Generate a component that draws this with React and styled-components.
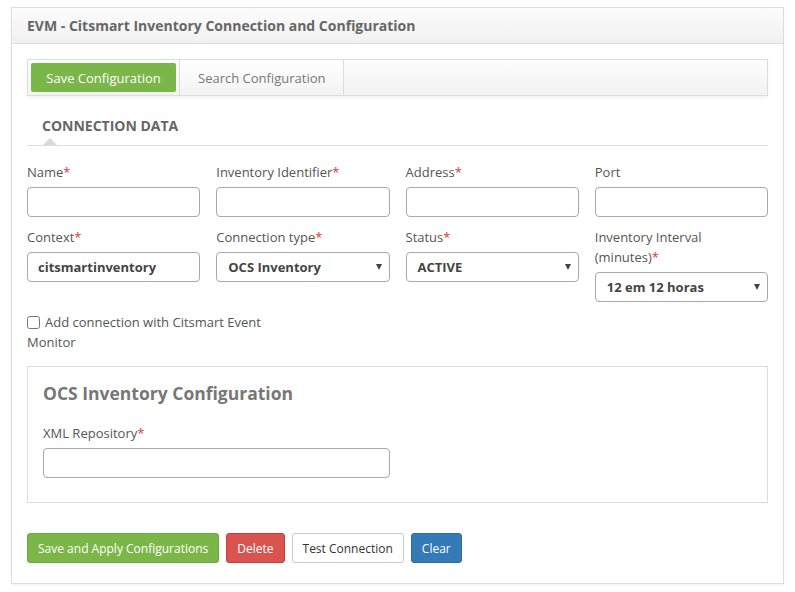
import styled, { createGlobalStyle } from "styled-components";

const GlobalStyle = createGlobalStyle`
  body {
    margin: 0;
    background: #fff;
    font-family: "Open Sans", "Liberation Sans", sans-serif;
    color: #555;
  }
`;

const Page = styled.div`
  padding: 7px 11px 8px 11px;
`;

const Panel = styled.div`
  border: 1px solid #ddd;
  background: #fff;
  box-shadow: 0 1px 2px rgba(0, 0, 0, 0.06);
`;

const PanelHeader = styled.div`
  height: 35px;
  display: flex;
  align-items: center;
  padding: 0 15px;
  background: linear-gradient(#fcfcfc, #f1f1f1);
  border-bottom: 1px solid #ddd;
  font-size: 14px;
  font-weight: 700;
  color: #666;
`;

const PanelBody = styled.div`
  padding: 15px 15px 20px 15px;
`;

const TabBar = styled.div`
  display: flex;
  align-items: stretch;
  height: 35px;
  border: 1px solid #ddd;
  background: linear-gradient(#fdfdfd, #f2f2f2);
  box-shadow: 0 2px 3px rgba(0, 0, 0, 0.05);
`;

const TabButton = styled.button`
  margin: 3px 0 3px 3px;
  border: none;
  border-radius: 2px;
  background: #7ab648;
  color: #fff;
  font-family: inherit;
  font-size: 13px;
  padding: 0 15px;
  width: 145px;
`;

const Tab = styled.div`
  display: flex;
  align-items: center;
  padding: 0 18px;
  margin-left: 3px;
  border-left: 1px solid #ddd;
  border-right: 1px solid #ddd;
  font-size: 13px;
  color: #777;
  background: linear-gradient(#fff, #f3f3f3);
`;

const SectionTitle = styled.div`
  position: relative;
  margin-top: 16px;
  padding: 4px 15px 10px 15px;
  border-bottom: 1px solid #ddd;
  font-size: 14px;
  font-weight: 700;
  color: #666;
  text-transform: uppercase;
  &::after {
    content: "";
    position: absolute;
    left: 16px;
    bottom: 0;
    border-left: 7px solid transparent;
    border-right: 7px solid transparent;
    border-bottom: 7px solid #d8d8d8;
  }
`;

const Grid = styled.div`
  display: grid;
  grid-template-columns: repeat(4, 1fr);
  column-gap: 16px;
  row-gap: 10px;
  margin-top: 16px;
  align-items: start;
`;

const Field = styled.div`
  display: flex;
  flex-direction: column;
`;

const Label = styled.label`
  font-size: 13px;
  line-height: 20px;
  color: #555;
  margin-bottom: 5px;
`;

const Req = styled.span`
  color: #e3342f;
`;

const Input = styled.input`
  box-sizing: border-box;
  height: 30px;
  width: ${(p) => p.$width || "100%"};
  border: 1px solid #a9a9a9;
  border-radius: 4px;
  padding: 0 10px;
  font-family: inherit;
  font-size: 13px;
  font-weight: 700;
  color: #444;
  background: #fff;
`;

const SelectBox = styled.div`
  box-sizing: border-box;
  height: 30px;
  display: flex;
  align-items: center;
  justify-content: space-between;
  border: 1px solid #a9a9a9;
  border-radius: 4px;
  padding: 0 7px 0 11px;
  font-size: 13px;
  font-weight: 700;
  color: #444;
  &::after {
    content: "";
    border-left: 3.5px solid transparent;
    border-right: 3.5px solid transparent;
    border-top: 6px solid #444;
  }
`;

const CheckRow = styled.label`
  display: block;
  width: 245px;
  margin-top: 10px;
  font-size: 13px;
  line-height: 20px;
  color: #555;
  & > input {
    width: 13px;
    height: 13px;
    margin: 0 5px 0 0;
    vertical-align: -2px;
  }
`;

const SubBox = styled.div`
  margin-top: 14px;
  border: 1px solid #ddd;
  padding: 10px 15px 24px 15px;
`;

const SubTitle = styled.div`
  font-size: 17.5px;
  font-weight: 700;
  color: #777;
  line-height: 32px;
  margin-bottom: 14px;
`;

const Actions = styled.div`
  display: flex;
  gap: 7px;
  margin-top: 30px;
`;

const variants = {
  green: "background:#7ab648;border-color:#6fa83f;color:#fff;",
  red: "background:#d9534f;border-color:#c9403b;color:#fff;",
  white: "background:#fff;border-color:#ccc;color:#333;",
  blue: "background:#337ab7;border-color:#2e6da4;color:#fff;",
};

const Button = styled.button`
  height: 30px;
  padding: 0 10px;
  border: 1px solid;
  border-radius: 3px;
  font-family: inherit;
  font-size: 12px;
  ${(p) => variants[p.$variant]}
`;

const fields = [
  { label: "Name", req: true },
  { label: "Inventory Identifier", req: true },
  { label: "Address", req: true },
  { label: "Port" },
];

export default function App() {
  return (
    <>
      <GlobalStyle />
      <Page>
        <Panel>
          <PanelHeader>EVM - Citsmart Inventory Connection and Configuration</PanelHeader>
          <PanelBody>
            <TabBar>
              <TabButton>Save Configuration</TabButton>
              <Tab>Search Configuration</Tab>
            </TabBar>

            <SectionTitle>Connection Data</SectionTitle>

            <Grid>
              {fields.map((f) => (
                <Field key={f.label}>
                  <Label>
                    {f.label}
                    {f.req && <Req>*</Req>}
                  </Label>
                  <Input />
                </Field>
              ))}
              <Field>
                <Label>
                  Context<Req>*</Req>
                </Label>
                <Input defaultValue="citsmartinventory" />
              </Field>
              <Field>
                <Label>
                  Connection type<Req>*</Req>
                </Label>
                <SelectBox>OCS Inventory</SelectBox>
              </Field>
              <Field>
                <Label>
                  Status<Req>*</Req>
                </Label>
                <SelectBox>ACTIVE</SelectBox>
              </Field>
              <Field>
                <Label>
                  Inventory Interval (minutes)<Req>*</Req>
                </Label>
                <SelectBox>12 em 12 horas</SelectBox>
              </Field>
            </Grid>

            <CheckRow>
              <input type="checkbox" />
              Add connection with Citsmart Event Monitor
            </CheckRow>

            <SubBox>
              <SubTitle>OCS Inventory Configuration</SubTitle>
              <Field>
                <Label>
                  XML Repository<Req>*</Req>
                </Label>
                <Input $width="347px" />
              </Field>
            </SubBox>

            <Actions>
              <Button $variant="green">Save and Apply Configurations</Button>
              <Button $variant="red">Delete</Button>
              <Button $variant="white">Test Connection</Button>
              <Button $variant="blue">Clear</Button>
            </Actions>
          </PanelBody>
        </Panel>
      </Page>
    </>
  );
}
